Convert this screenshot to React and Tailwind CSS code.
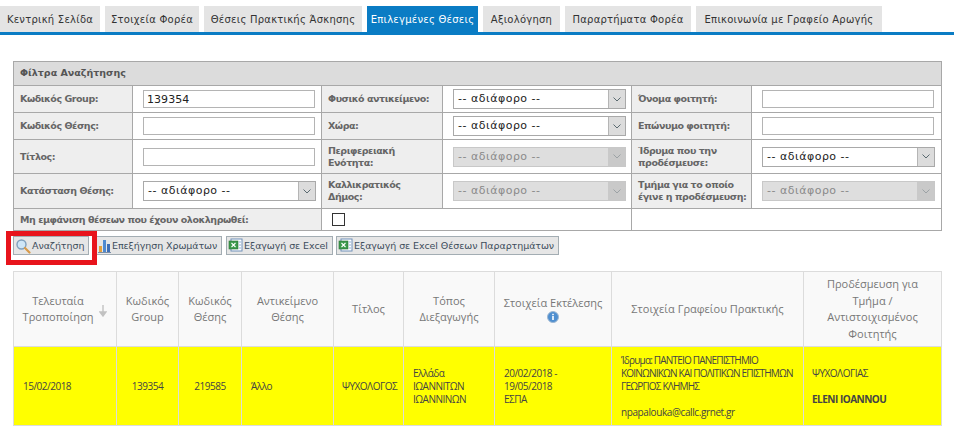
import React from 'react';

const TABS = [
  { label: 'Κεντρική Σελίδα', w: 'w-[100px]' },
  { label: 'Στοιχεία Φορέα', w: 'w-[94px]' },
  { label: 'Θέσεις Πρακτικής Άσκησης', w: 'w-[158px]' },
  { label: 'Επιλεγμένες Θέσεις', w: 'w-[111px]', active: true },
  { label: 'Αξιολόγηση', w: 'w-[77px]' },
  { label: 'Παραρτήματα Φορέα', w: 'w-[126px]' },
  { label: 'Επικοινωνία με Γραφείο Αρωγής', w: 'w-[186px]' },
];

const Chevron = ({ disabled }) => (
  <svg width="8" height="5" viewBox="0 0 8 5" className={disabled ? 'opacity-40' : ''}>
    <path d="M0.5 0.5 L4 4 L7.5 0.5" fill="none" stroke="#5a6a70" strokeWidth="1" />
  </svg>
);

const Select = ({ disabled }) => (
  <div className={`flex h-[20px] w-[173px] items-stretch border ${disabled ? 'border-[#c8c8c8] bg-[#dedede] text-[#8a8a8a]' : 'border-[#a9a9a9] bg-white text-[#222]'}`}>
    <span className="flex-1 pl-[4px] text-[11px] leading-[18px] tracking-[0.5px]">-- αδιάφορο --</span>
    <span className={`flex w-[17px] items-center justify-center ${disabled ? 'bg-[#c9c9c9]' : 'border-l border-[#b5b5b5] bg-[#dcdcdc]'}`}>
      <Chevron disabled={disabled} />
    </span>
  </div>
);

const Input = ({ value }) => (
  <input
    readOnly
    defaultValue={value}
    className="block h-[18px] w-[172px] border border-[#b4b4b4] bg-white pl-[3px] text-[11px] tracking-[0.05px] text-[#222] outline-none"
  />
);

const Label = ({ children, colSpan, className = '' }) => (
  <td colSpan={colSpan} className={`border border-[#a8a8a8] bg-[#eeeeee] pl-[6px] align-middle text-[9.5px] font-bold leading-[12px] tracking-[-0.45px] text-[#666] ${className}`}>
    {children}
  </td>
);

const Field = ({ children }) => (
  <td className="border border-[#a8a8a8] bg-white pl-[10px] pr-[5px] align-middle">{children}</td>
);

const SearchIcon = () => (
  <svg width="16" height="16" viewBox="0 0 16 16">
    <circle cx="6.5" cy="6.5" r="4.5" fill="#cfe6f7" stroke="#7f9fbc" strokeWidth="1.4" />
    <path d="M10 10 L14.5 14.5" stroke="#d89a4a" strokeWidth="2.2" strokeLinecap="round" />
  </svg>
);

const ChartIcon = () => (
  <svg width="13" height="15" viewBox="0 0 13 15">
    <rect x="1" y="8" width="3" height="6" fill="#e5a13c" />
    <rect x="5" y="2" width="3" height="12" fill="#4f8ad0" />
    <rect x="9" y="6" width="3" height="8" fill="#3f6fb5" />
    <rect x="0" y="14" width="13" height="1" fill="#7a8ea8" />
  </svg>
);

const ExcelIcon = () => (
  <svg width="15" height="15" viewBox="0 0 15 15">
    <rect x="3" y="1" width="11" height="12" fill="#fff" stroke="#6f8fb8" />
    <rect x="1" y="3" width="9" height="8" fill="#3d9a4a" stroke="#2a7436" strokeWidth="0.6" />
    <path d="M3.5 5 L7.5 9 M7.5 5 L3.5 9" stroke="#fff" strokeWidth="1.1" />
    <path d="M11 4 H13 M11 7 H13 M11 10 H13" stroke="#8fb0d6" />
  </svg>
);

const Btn = ({ icon, children, className = '' }) => (
  <button className={`flex h-[19px] items-center justify-start gap-[1px] whitespace-nowrap border border-[#a3adb3] bg-[#e6e6e6] px-[1px] text-[9.5px] leading-none tracking-[-0.08px] text-[#3d4d5c] ${className}`}>
    {icon}
    <span>{children}</span>
  </button>
);

const HEADERS = [
  { w: 'w-[103px]', text: ['Τελευταία', 'Τροποποίηση'], sort: true },
  { w: 'w-[62px]', text: ['Κωδικός', 'Group'] },
  { w: 'w-[63px]', text: ['Κωδικός', 'Θέσης'] },
  { w: 'w-[92px]', text: ['Αντικείμενο', 'Θέσης'] },
  { w: 'w-[70px]', text: ['Τίτλος'] },
  { w: 'w-[91px]', text: ['Τόπος', 'Διεξαγωγής'] },
  { w: 'w-[117px]', text: ['Στοιχεία Εκτέλεσης'], info: true },
  { w: 'w-[192px]', text: ['Στοιχεία Γραφείου Πρακτικής'] },
  { w: 'w-[138px]', text: ['Προδέσμευση για', 'Τμήμα /', 'Αντιστοιχισμένος', 'Φοιτητής'] },
];

const InfoIcon = () => (
  <svg width="12" height="12" viewBox="0 0 12 12" className="mx-auto">
    <circle cx="6" cy="6" r="5.5" fill="#4f8fd0" stroke="#9fb8d2" />
    <rect x="5.2" y="5" width="1.6" height="4" fill="#fff" />
    <rect x="5.2" y="2.8" width="1.6" height="1.4" fill="#fff" />
  </svg>
);

const Td = ({ children, className = '' }) => (
  <td className={`whitespace-nowrap border border-[#dcdcdc] px-[9px] align-middle text-[10px] leading-[13px] tracking-[-0.5px] text-[#444] ${className}`}>
    {children}
  </td>
);

export default function App() {
  return (
    <div className="relative h-[430px] w-[954px] overflow-hidden bg-white font-['DejaVu_Sans',sans-serif]">
      <div className="flex gap-[5px] border-b-[3px] border-[#0a7cc4] pt-[6px]">
        {TABS.map(t => (
          <div
            key={t.label}
            className={`flex h-[26px] items-center justify-center whitespace-nowrap text-[10px] tracking-[0.25px] ${t.w} ${t.active ? 'bg-[#0a7cc4] text-white' : 'bg-[#e4e4e4] text-[#333]'}`}
          >
            {t.label}
          </div>
        ))}
      </div>

      <div className="px-[13px] pt-[26px]">
        <table className="w-[928px] table-fixed border-collapse">
          <colgroup>
            <col className="w-[119px]" />
            <col className="w-[189px]" />
            <col className="w-[121px]" />
            <col className="w-[189px]" />
            <col className="w-[120px]" />
            <col className="w-[190px]" />
          </colgroup>
          <tbody>
            <tr className="h-[24px]">
              <td colSpan={6} className="border border-[#a8a8a8] bg-[#dcdcdc] px-[6px] text-[9.5px] font-bold text-[#555]">
                Φίλτρα Αναζήτησης
              </td>
            </tr>
            <tr className="h-[27px]">
              <Label>Κωδικός Group:</Label>
              <Field><Input value="139354" /></Field>
              <Label>Φυσικό αντικείμενο:</Label>
              <Field><Select /></Field>
              <Label>Όνομα φοιτητή:</Label>
              <Field><Input /></Field>
            </tr>
            <tr className="h-[27px]">
              <Label>Κωδικός Θέσης:</Label>
              <Field><Input /></Field>
              <Label>Χώρα:</Label>
              <Field><Select /></Field>
              <Label>Επώνυμο φοιτητή:</Label>
              <Field><Input /></Field>
            </tr>
            <tr className="h-[34px]">
              <Label>Τίτλος:</Label>
              <Field><Input /></Field>
              <Label>Περιφερειακή<br />Ενότητα:</Label>
              <Field><Select disabled /></Field>
              <Label>Ίδρυμα που την<br />προδέσμευσε:</Label>
              <Field><Select /></Field>
            </tr>
            <tr className="h-[35px]">
              <Label>Κατάσταση Θέσης:</Label>
              <Field><Select /></Field>
              <Label>Καλλικρατικός<br />Δήμος:</Label>
              <Field><Select disabled /></Field>
              <Label>Τμήμα για το οποίο<br />έγινε η προδέσμευση:</Label>
              <Field><Select disabled /></Field>
            </tr>
            <tr className="h-[22px]">
              <Label colSpan={2}>Μη εμφάνιση θέσεων που έχουν ολοκληρωθεί:</Label>
              <td colSpan={2} className="border border-[#a8a8a8] bg-white px-[10px]">
                <span className="block h-[13px] w-[13px] border border-[#333] bg-white" />
              </td>
              <td colSpan={2} className="border border-[#a8a8a8] bg-white" />
            </tr>
          </tbody>
        </table>

        <div className="mt-[5px] flex items-center">
          <Btn icon={<SearchIcon />} className="w-[76px]">Αναζήτηση</Btn>
          <Btn icon={<ChartIcon />} className="ml-[7px] w-[126px]">Επεξήγηση Χρωμάτων</Btn>
          <Btn icon={<ExcelIcon />} className="ml-[4px] w-[107px]">Εξαγωγή σε Excel</Btn>
          <Btn icon={<ExcelIcon />} className="ml-[3px] w-[223px]">Εξαγωγή σε Excel Θέσεων Παραρτημάτων</Btn>
        </div>

        <table className="mt-[16px] w-[928px] table-fixed border-collapse font-['Open_Sans',sans-serif]">
          <thead>
            <tr className="h-[75px]">
              {HEADERS.map(h => (
                <th key={h.text[0] + h.w} className={`${h.w} ${h.sort ? 'pr-[14px]' : ''} relative border border-[#dcdcdc] bg-[#f9f9f9] text-center align-middle text-[11px] font-normal leading-[16.5px] text-[#777]`}>
                  {h.text.map(line => <div key={line}>{line}</div>)}
                  {h.info && <InfoIcon />}
                  {h.sort && (
                    <svg width="8" height="12" viewBox="0 0 8 12" className="absolute right-[9px] top-[33px]">
                      <path d="M4 0 V9 M1 7 L4 11 L7 7 Z" stroke="#c2c2c2" fill="#c2c2c2" strokeWidth="1.4" />
                    </svg>
                  )}
                </th>
              ))}
            </tr>
          </thead>
          <tbody>
            <tr className="h-[79px] bg-[#ffff00]">
              <Td>15/02/2018</Td>
              <Td className="text-center">139354</Td>
              <Td className="text-center">219585</Td>
              <Td>Άλλο</Td>
              <Td className="!px-[8px]">ΨΥΧΟΛΟΓΟΣ</Td>
              <Td>Ελλάδα<br />ΙΩΑΝΝΙΤΩΝ<br />ΙΩΑΝΝΙΝΩΝ</Td>
              <Td>20/02/2018 -<br />19/05/2018<br />ΕΣΠΑ</Td>
              <Td className="tracking-[-0.8px]">
                Ίδρυμα: ΠΑΝΤΕΙΟ ΠΑΝΕΠΙΣΤΗΜΙΟ<br />
                ΚΟΙΝΩΝΙΚΩΝ ΚΑΙ ΠΟΛΙΤΙΚΩΝ ΕΠΙΣΤΗΜΩΝ<br />
                ΓΕΩΡΓΙΟΣ ΚΛΗΜΗΣ<br /><br />
                <span className="tracking-[-0.4px]">npapalouka@callc.grnet.gr</span>
              </Td>
              <Td className="!px-[8px]">
                ΨΥΧΟΛΟΓΙΑΣ<br /><br />
                <span className="font-bold">ELENI IOANNOU</span>
              </Td>
            </tr>
          </tbody>
        </table>
      </div>

      {/* κόκκινο πλαίσιο πάνω από το κουμπί αναζήτησης */}
      <div className="pointer-events-none absolute left-[6px] top-[231px] h-[34px] w-[91px] border-[5px] border-[#e8141c]" />
    </div>
  );
}
